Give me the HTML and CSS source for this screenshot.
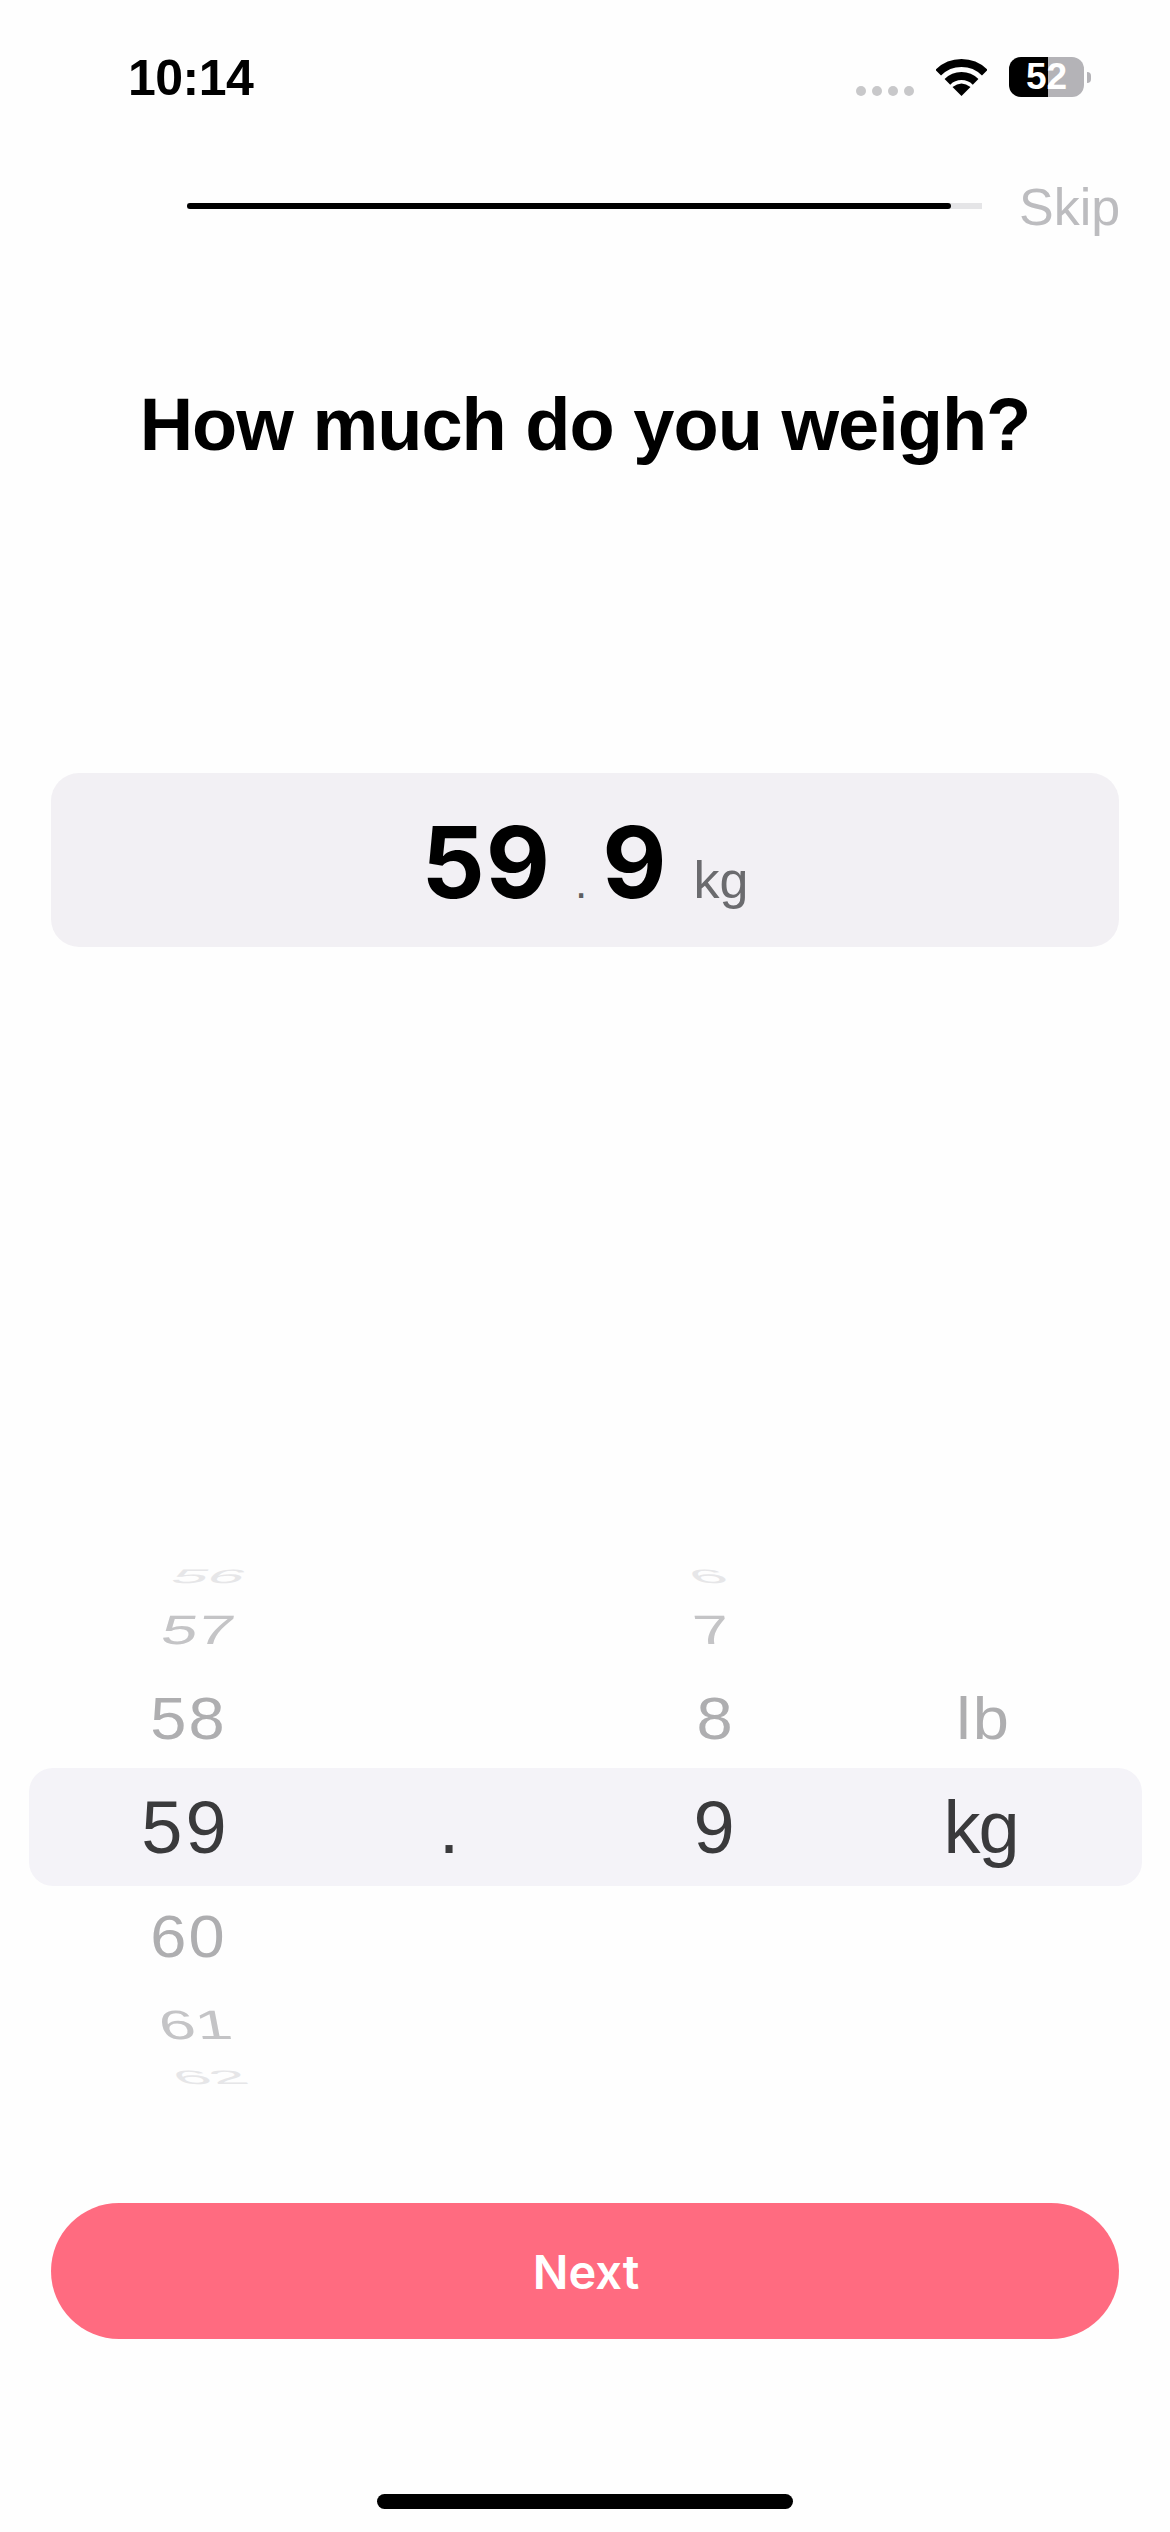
FILE: index.html
```html
<!DOCTYPE html>
<html>

	<head>
		<meta charset="UTF-8">
		<title>Weight</title>
		<link rel="stylesheet" href="styles.css">
	</head>

	<body>
		<div class="status">
			<span class="time">10:14</span>
			<div class="status-icons">
				<div class="signal"><i></i><i></i><i></i><i></i></div>
				<svg class="wifi" viewBox="0 0 51 37" width="51" height="37">
					<path d="M2.2 13.7A33 33 0 0 1 48.8 13.7" fill="none" stroke="#000" stroke-width="8" />
					<path d="M11.4 22.9A20 20 0 0 1 39.6 22.9" fill="none" stroke="#000" stroke-width="8" />
					<path d="M25.5 37L16.5 28Q25.5 21 34.5 28Z" fill="#000" />
				</svg>
				<div class="battery"><span>52</span></div>
				<div class="battery-nub"></div>
			</div>
		</div>

		<div class="topbar">
			<div class="track"><div class="fill"></div></div>
			<span class="skip">Skip</span>
		</div>

		<h1 class="title">How much do you weigh?</h1>

		<div class="value-card">
			<span class="big">59</span>
			<span class="dot">.</span>
			<span class="big">9</span>
			<span class="unit">kg</span>
		</div>

		<div class="picker">
			<div class="row far3"><span><b class="up">56</b></span><span></span><span><b class="up">6</b></span><span></span></div>
			<div class="row far2"><span><b class="up">57</b></span><span></span><span><b class="up">7</b></span><span></span></div>
			<div class="row far1"><span><b class="up">58</b></span><span></span><span><b class="up">8</b></span><span><b class="up">lb</b></span></div>
			<div class="row selected"><span>59</span><span>.</span><span>9</span><span>kg</span></div>
			<div class="row far1"><span><b class="down">60</b></span><span></span><span></span><span></span></div>
			<div class="row far2"><span><b class="down">61</b></span><span></span><span></span><span></span></div>
			<div class="row far3"><span><b class="down">62</b></span><span></span><span></span><span></span></div>
		</div>

		<button class="next">Next</button>

		<div class="home-bar"></div>
	</body>

</html>
```

FILE: styles.css
```css
* {
	margin: 0;
	padding: 0;
	border: 0;
	box-sizing: border-box;
}

body {
	width: 1170px;
	height: 2532px;
	overflow: hidden;
	background: #fefefe;
	font-family: "Liberation Sans", Arial, sans-serif;
	color: #000;
}

.status {
	height: 162px;
	padding: 53px 79px 0 128px;
	display: flex;
	justify-content: space-between;
	align-items: flex-start;
}

.time {
	font-size: 50px;
	line-height: 50px;
	font-weight: 700;
	letter-spacing: -0.5px;
}

.status-icons {
	display: flex;
	align-items: flex-start;
	padding-top: 4px;
}

.signal {
	display: flex;
	gap: 6px;
	margin-top: 29px;
	margin-right: 22px;
}

.signal i {
	display: block;
	width: 10px;
	height: 10px;
	border-radius: 50%;
	background: #c8c8ca;
}

.wifi {
	margin-top: 2px;
	margin-right: 22px;
}

.battery {
	width: 75px;
	height: 40px;
	border-radius: 12px;
	background: linear-gradient(to right, #000 39px, #b4b3b7 39px);
	color: #fff;
	font-size: 37px;
	line-height: 40px;
	font-weight: 700;
	text-align: center;
}

.battery-nub {
	width: 4px;
	height: 11px;
	margin-top: 15px;
	margin-left: 3px;
	border-radius: 0 6px 6px 0;
	background: #b4b3b7;
}

.topbar {
	height: 90px;
	padding-left: 187px;
	display: flex;
	align-items: center;
}

.track {
	width: 795px;
	height: 6px;
	margin-top: -2px;
	background: #e5e5e7;
}

.fill {
	width: 764px;
	height: 6px;
	border-radius: 3px;
	background: #000;
}

.skip {
	margin-left: 37px;
	font-size: 52px;
	line-height: 60px;
	color: #bcbcbf;
}

.title {
	margin-top: 128px;
	text-align: center;
	font-size: 74px;
	line-height: 90px;
	font-weight: 700;
	letter-spacing: -1px;
}

.value-card {
	width: 1068px;
	height: 174px;
	margin: 303px 0 0 51px;
	padding-top: 2px;
	border-radius: 28px;
	background: #f2f0f4;
	display: flex;
	justify-content: center;
	align-items: baseline;
	line-height: 174px;
}

.big {
	font-family: Inter, "Liberation Sans", sans-serif;
	font-size: 99px;
	font-weight: 700;
	letter-spacing: 1px;
}

.dot {
	font-size: 44px;
	color: #5e5e60;
	margin: 0 15px 0 24px;
}

.unit {
	font-size: 52px;
	color: #6b6b6e;
	margin-left: 26px;
}

.picker {
	width: 1113px;
	margin: 615px 0 0 29px;
	font-size: 65px;
	color: #aeaeb0;
}

.row {
	display: flex;
	padding-left: 24px;
	align-items: center;
}

.row span {
	width: 265px;
	text-align: center;
}

.row b {
	display: inline-block;
	font-weight: 400;
	line-height: 1;
}

.selected {
	height: 118px;
	border-radius: 24px;
	background: #f4f3f8;
	color: #3a3a3c;
	font-size: 74px;
	letter-spacing: 3px;
}

.selected span:last-child {
	letter-spacing: -2px;
}

.far1 {
	height: 100px;
}

.far1 b {
	letter-spacing: 2px;
}

.far2 {
	height: 77px;
	color: #c4c4c6;
}

.far3 {
	height: 29px;
	color: #e6e6e8;
}

.far1 .up,
.far1 .down {
	transform: translateX(3px) scaleY(0.9);
}

.far2 .up {
	transform: translateX(13px) scaleY(0.63) skewX(-7deg);
}

.far2 .down {
	transform: translateX(10px) scaleY(0.63) skewX(7deg);
}

.far3 .up {
	transform: translateX(24px) scaleY(0.3) skewX(-12deg);
}

.far3 .down {
	transform: translateX(25px) scaleY(0.3) skewX(12deg);
}

.row span:nth-child(3) .up {
	transform: scaleY(0.9);
}

.far2 span:nth-child(3) .up {
	transform: translateX(-3px) scaleY(0.63) skewX(7deg);
}

.far3 span:nth-child(3) .up {
	transform: translateX(-7px) scaleY(0.3) skewX(12deg);
}

.next {
	display: block;
	width: 1068px;
	height: 136px;
	margin: 111px 0 0 51px;
	padding-left: 2px;
	border-radius: 68px;
	background: #ff6b80;
	color: #fff;
	font-family: Inter, "Liberation Sans", sans-serif;
	font-size: 47px;
	font-weight: 600;
}

.home-bar {
	width: 416px;
	height: 15px;
	margin: 155px 0 0 377px;
	border-radius: 8px;
	background: #000;
}
```
